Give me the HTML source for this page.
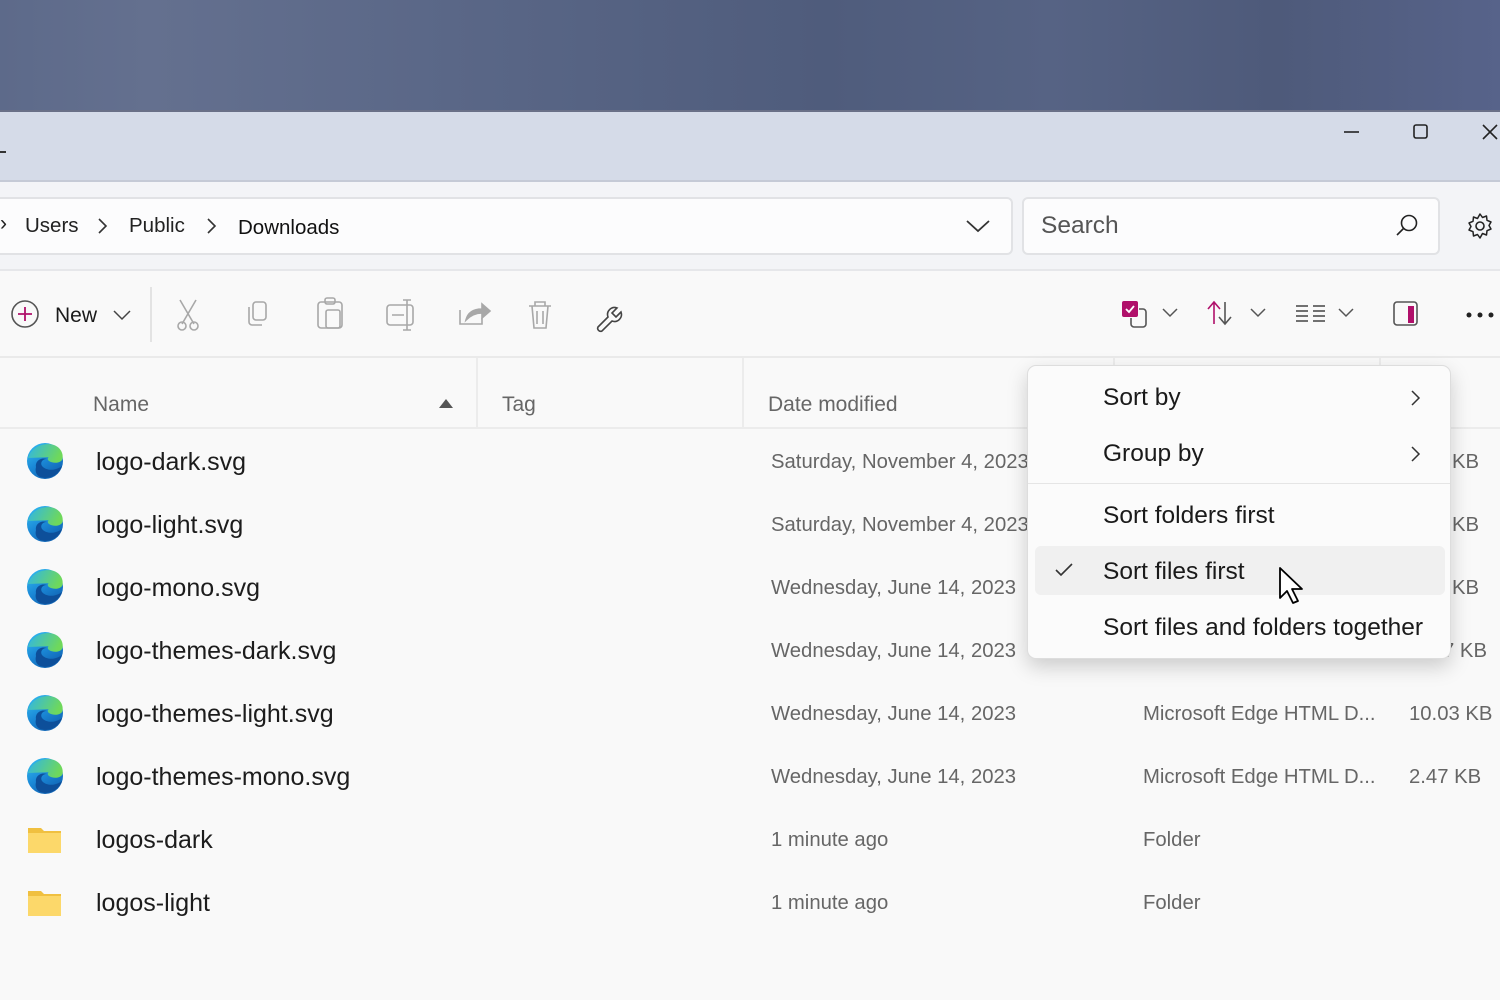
<!DOCTYPE html>
<html><head><style>
*{margin:0;padding:0;box-sizing:border-box}
body{width:1500px;height:1000px;overflow:hidden;background:#f9f9f9;font-family:"Liberation Sans",sans-serif;position:relative;color:#1a1a1a}
.a{position:absolute}
.bg{left:0;top:0;width:1500px;height:110px;background:linear-gradient(90deg,#5d6a8a 0%,#64708f 10%,#5a6787 30%,#4f5c7c 55%,#566384 70%,#4e5a7a 85%,#57638a 100%)}
.title{left:0;top:110px;width:1500px;height:72px;background:#d5dbe8;border-top:2px solid #6a7087;border-bottom:2px solid #c5cad6}
.addr{left:0;top:182px;width:1500px;height:89px;background:#f3f4f7;border-bottom:2px solid #e6e7ea}
.box{background:#fcfcfd;border:2px solid #e1e2e5;border-radius:6px}
.tb{left:0;top:271px;width:1500px;height:87px;background:#f9f9f9;border-bottom:2px solid #eaeaea}
.hdr{color:#666;font-size:21px;top:393px}
.vd{top:358px;width:2px;height:70px;background:#ececec}
.row{left:0;width:1500px;height:63px}
.nm{position:absolute;left:96px;top:18px;font-size:25px;color:#1c1c1c}
.dt{position:absolute;left:771px;top:21px;font-size:20.3px;color:#666}
.ty{position:absolute;left:1143px;top:21px;font-size:20.3px;color:#666}
.sz{position:absolute;left:1409px;top:21px;font-size:20.3px;color:#666}
.ic{position:absolute;left:26px;top:12px}
.menu{left:1027px;top:365px;width:424px;height:294px;background:#fbfbfb;border:1px solid #ddd;border-radius:9px;box-shadow:0 8px 20px rgba(0,0,0,.18)}
.mi{position:absolute;left:75px;font-size:24.5px;color:#1a1a1a}
</style></head><body>
<div class="a bg"></div>
<div class="a title"></div>
<div class="a" style="left:0;top:151px;width:6px;height:2px;background:#333"></div>
<svg class="a" style="left:1340px;top:120px" width="160" height="24"><path d="M4 12h15" stroke="#222" stroke-width="1.6"/><rect x="74" y="5" width="13" height="13" rx="2" fill="none" stroke="#222" stroke-width="1.6"/><path d="M143 5l14 14M157 5l-14 14" stroke="#222" stroke-width="1.6"/></svg>
<div class="a addr"></div>
<div class="a box" style="left:-10px;top:197px;width:1023px;height:58px"></div>
<div class="a" style="left:0;top:212px;font-size:21px;color:#222">›</div>
<div class="a" style="left:25px;top:214px;font-size:20.5px;color:#222">Users</div>
<svg class="a" style="left:96px;top:216px" width="14" height="20"><path d="M3 3l7 7-7 7" stroke="#333" stroke-width="1.6" fill="none"/></svg>
<div class="a" style="left:129px;top:214px;font-size:20.5px;color:#222">Public</div>
<svg class="a" style="left:205px;top:216px" width="14" height="20"><path d="M3 3l7 7-7 7" stroke="#333" stroke-width="1.6" fill="none"/></svg>
<div class="a" style="left:238px;top:216px;font-size:20.5px;color:#111">Downloads</div>
<svg class="a" style="left:965px;top:218px" width="26" height="16"><path d="M2 3l11 10 11-10" stroke="#333" stroke-width="1.8" fill="none"/></svg>
<div class="a box" style="left:1022px;top:197px;width:418px;height:58px"></div>
<div class="a" style="left:1041px;top:212px;font-size:24.5px;color:#555">Search</div>
<svg class="a" style="left:1394px;top:212px" width="26" height="26"><circle cx="15" cy="11" r="7.5" fill="none" stroke="#222" stroke-width="1.6"/><path d="M9.5 16.5L3 23" stroke="#222" stroke-width="1.6"/></svg>
<svg class="a" style="left:1466px;top:212px" width="28" height="28" viewBox="0 0 28 28"><circle cx="14" cy="14" r="4" fill="none" stroke="#222" stroke-width="1.6"/><path d="M14 2l2.5 3.5 4-1.5 .5 4.3 4 1.7-2 3.5 2 3.5-4 1.7-.5 4.3-4-1.5L14 26l-2.5-3.5-4 1.5-.5-4.3-4-1.7 2-3.5-2-3.5 4-1.7.5-4.3 4 1.5z" fill="none" stroke="#222" stroke-width="1.5" stroke-linejoin="round"/></svg>
<div class="a tb"></div>
<svg class="a" style="left:10px;top:299px" width="30" height="30"><circle cx="15" cy="15" r="13" fill="none" stroke="#555" stroke-width="1.6"/><path d="M15 8v14M8 15h14" stroke="#b0106a" stroke-width="1.8"/></svg>
<div class="a" style="left:55px;top:304px;font-size:21px;color:#1a1a1a">New</div>
<svg class="a" style="left:112px;top:308px" width="20" height="14"><path d="M2 3l8 8 8-8" stroke="#444" stroke-width="1.5" fill="none"/></svg>
<div class="a" style="left:150px;top:287px;width:2px;height:55px;background:#e3e3e3"></div>
<svg class="a" style="left:170px;top:296px" width="460" height="40" fill="none" stroke="#a8a8a8" stroke-width="1.6">
<path d="M10 4l14 24M26 4L12 28"/><circle cx="12" cy="30" r="4"/><circle cx="24" cy="30" r="4"/>
<rect x="83" y="6" width="13" height="18" rx="3"/><path d="M79 11v15a3 3 0 0 0 3 3h10"/>
<rect x="148" y="6" width="24" height="26" rx="3"/><rect x="155" y="2" width="10" height="6" rx="2"/><rect x="156" y="14" width="14" height="18" rx="2"/>
<rect x="217" y="9" width="26" height="20" rx="3"/><path d="M222 19h12M237 4v30M233 4h8M233 34h8"/>
<path d="M290 14v14h22v-6" /><path d="M296 24c2-8 8-11 16-11V8l8 7-8 7v-5c-6 0-11 2-16 7z" fill="#a8a8a8"/>
<path d="M359 10h22M365 10V6h10v4M362 10l2 22h12l2-22M367 15v13M373 15v13"/>
<path d="M428 31l10-10a7 7 0 0 1 9-9l-5 5 4 4 5-5a7 7 0 0 1-9 9l-10 10a3 3 0 0 1-4-4z" stroke="#444"/>
</svg>
<svg class="a" style="left:1118px;top:298px" width="380" height="34">
<rect x="4" y="3" width="16" height="16" rx="2" fill="#b0106a"/><path d="M8 11l3 3 5-6" stroke="#fff" stroke-width="1.8" fill="none"/>
<path d="M21 11h4a3 3 0 0 1 3 3v12a3 3 0 0 1-3 3H16a3 3 0 0 1-3-3v-6" stroke="#555" stroke-width="1.6" fill="none"/>
<path d="M45 11l7 7 7-7" stroke="#555" stroke-width="1.5" fill="none"/>
<path d="M96 26V4M90 11l6-7 6 7" stroke="#b0106a" stroke-width="1.6" fill="none"/><path d="M107 4v22M101 19l6 7 6-7" stroke="#555" stroke-width="1.6" fill="none"/>
<path d="M133 11l7 7 7-7" stroke="#555" stroke-width="1.5" fill="none"/>
<path d="M178 8h12M178 13h12M178 18h12M178 23h12M195 8h12M195 13h12M195 18h12M195 23h12" stroke="#444" stroke-width="1.5"/>
<path d="M221 11l7 7 7-7" stroke="#555" stroke-width="1.5" fill="none"/>
<rect x="276" y="4" width="23" height="23" rx="3" fill="none" stroke="#555" stroke-width="1.6"/><rect x="290" y="8" width="6" height="17" fill="#b0106a"/>
<circle cx="351" cy="17" r="2.5" fill="#222"/><circle cx="362" cy="17" r="2.5" fill="#222"/><circle cx="373" cy="17" r="2.5" fill="#222"/>
</svg>
<div class="a" style="left:0;top:427px;width:1500px;height:2px;background:#ececec"></div>
<div class="a hdr" style="left:93px">Name</div>
<svg class="a" style="left:438px;top:397px" width="16" height="12"><path d="M1 11l7-9 7 9z" fill="#555"/></svg>
<div class="a vd" style="left:476px"></div>
<div class="a hdr" style="left:502px">Tag</div>
<div class="a vd" style="left:742px"></div>
<div class="a hdr" style="left:768px">Date modified</div>
<div class="a vd" style="left:1113px"></div>
<div class="a vd" style="left:1379px"></div>

<svg width="0" height="0" style="position:absolute"><defs>
<linearGradient id="eg" x1="0" y1="0" x2="0.6" y2="1"><stop offset="0" stop-color="#35c1f1"/><stop offset=".55" stop-color="#1b8ad8"/><stop offset="1" stop-color="#1164b4"/></linearGradient>
<linearGradient id="eg2" x1="0" y1="0" x2="1" y2="0.3"><stop offset="0" stop-color="#2fb5e8"/><stop offset="1" stop-color="#6fd85b"/></linearGradient>
<symbol id="edge" viewBox="0 0 38 38"><circle cx="19" cy="19" r="18" fill="url(#eg)"/><path d="M2 16C5 5 18 0 28 3c8 3 10 11 8 15-3 4-10 3-13 1-3-2 0-6 4-4" fill="url(#eg2)"/><path d="M10 25c-1-6 5-10 11-8-5 0-7 4-5 7 3 4 12 6 20 0-3 9-13 14-22 11-4-2-5-6-4-10z" fill="#0d4f9a"/></symbol>
</defs></svg>

<div class="a row" style="top:430px"><svg class="ic" width="38" height="38"><use href="#edge"/></svg><div class="nm">logo-dark.svg</div><div class="dt">Saturday, November 4, 2023</div><div class="sz" style="left:1452px">KB</div></div>
<div class="a row" style="top:493px"><svg class="ic" width="38" height="38"><use href="#edge"/></svg><div class="nm">logo-light.svg</div><div class="dt">Saturday, November 4, 2023</div><div class="sz" style="left:1452px">KB</div></div>
<div class="a row" style="top:556px"><svg class="ic" width="38" height="38"><use href="#edge"/></svg><div class="nm">logo-mono.svg</div><div class="dt">Wednesday, June 14, 2023</div><div class="sz" style="left:1452px">KB</div></div>
<div class="a row" style="top:619px"><svg class="ic" width="38" height="38"><use href="#edge"/></svg><div class="nm">logo-themes-dark.svg</div><div class="dt">Wednesday, June 14, 2023</div><div class="sz" style="left:1443px">7 KB</div></div>
<div class="a row" style="top:682px"><svg class="ic" width="38" height="38"><use href="#edge"/></svg><div class="nm">logo-themes-light.svg</div><div class="dt">Wednesday, June 14, 2023</div><div class="ty">Microsoft Edge HTML D...</div><div class="sz">10.03 KB</div></div>
<div class="a row" style="top:745px"><svg class="ic" width="38" height="38"><use href="#edge"/></svg><div class="nm">logo-themes-mono.svg</div><div class="dt">Wednesday, June 14, 2023</div><div class="ty">Microsoft Edge HTML D...</div><div class="sz">2.47 KB</div></div>
<div class="a row" style="top:808px"><svg class="ic" width="38" height="38"><path d="M2 8h13l3 3h17v22H2z" fill="#f0c040"/><path d="M2 13h33v20H2z" fill="#fcd86a"/></svg><div class="nm">logos-dark</div><div class="dt">1 minute ago</div><div class="ty">Folder</div></div>
<div class="a row" style="top:871px"><svg class="ic" width="38" height="38"><path d="M2 8h13l3 3h17v22H2z" fill="#f0c040"/><path d="M2 13h33v20H2z" fill="#fcd86a"/></svg><div class="nm">logos-light</div><div class="dt">1 minute ago</div><div class="ty">Folder</div></div>

<div class="a menu">
<div class="mi" style="top:18px">Sort by</div>
<svg class="a" style="left:382px;top:22px" width="12" height="20"><path d="M2 3l7 7-7 7" stroke="#333" stroke-width="1.5" fill="none"/></svg>
<div class="mi" style="top:74px">Group by</div>
<svg class="a" style="left:382px;top:78px" width="12" height="20"><path d="M2 3l7 7-7 7" stroke="#333" stroke-width="1.5" fill="none"/></svg>
<div class="a" style="left:0;top:117px;width:422px;height:1px;background:#e5e5e5"></div>
<div class="mi" style="top:136px">Sort folders first</div>
<div class="a" style="left:7px;top:180px;width:410px;height:49px;background:#f0f0f0;border-radius:6px"></div>
<svg class="a" style="left:26px;top:196px" width="20" height="16"><path d="M2 8l5 5 11-11" stroke="#333" stroke-width="1.6" fill="none"/></svg>
<div class="mi" style="top:192px">Sort files first</div>
<div class="mi" style="top:248px">Sort files and folders together</div>
<svg class="a" style="left:250px;top:200px" width="30" height="40"><path d="M2 2v30l7-7 6 12 5-2-6-12h10z" fill="#fff" stroke="#000" stroke-width="1.8" stroke-linejoin="round"/></svg>
</div>
</body></html>
